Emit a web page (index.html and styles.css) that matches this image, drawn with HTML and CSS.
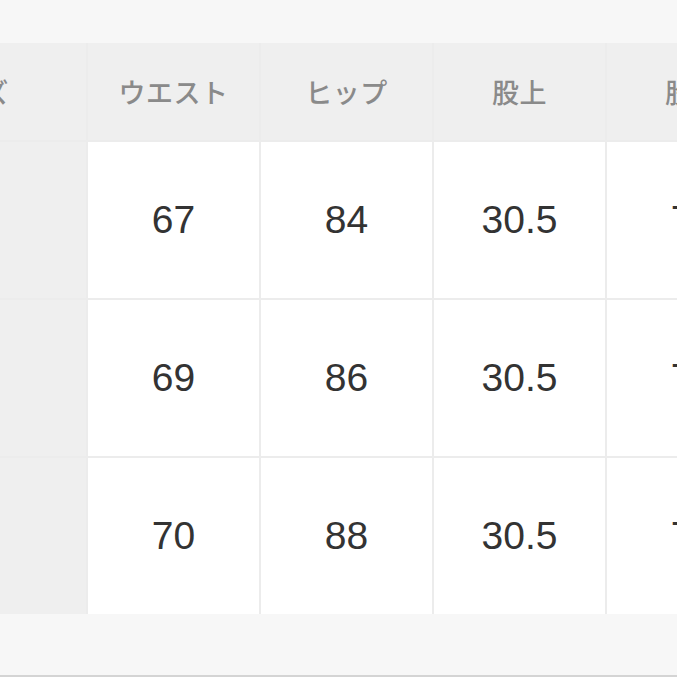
FILE: index.html
```html
<!DOCTYPE html>
<html lang="ja">
<head>
<meta charset="utf-8">
<link rel="stylesheet" href="styles.css">
</head>
<body>
<div class="page">
  <div class="top-band"></div>
  <div class="size-table">
    <div class="cell head label">サイズ</div>
    <div class="cell head">ウエスト</div>
    <div class="cell head">ヒップ</div>
    <div class="cell head">股上</div>
    <div class="cell head">股下</div>

    <div class="cell label">S</div>
    <div class="cell num">67</div>
    <div class="cell num">84</div>
    <div class="cell num">30.5</div>
    <div class="cell num">74</div>

    <div class="cell label">M</div>
    <div class="cell num">69</div>
    <div class="cell num">86</div>
    <div class="cell num">30.5</div>
    <div class="cell num">75</div>

    <div class="cell label">L</div>
    <div class="cell num">70</div>
    <div class="cell num">88</div>
    <div class="cell num">30.5</div>
    <div class="cell num">76</div>
  </div>
  <div class="filler"></div>
  <div class="bottom-line"></div>
</div>
</body>
</html>
```

FILE: styles.css
```css
html, body {
  margin: 0;
  padding: 0;
  background: #f7f7f7;
}

.page {
  width: 677px;
  height: 677px;
  overflow: hidden;
  display: flex;
  flex-direction: column;
}

.top-band {
  height: 43px;
  flex: none;
}

.size-table {
  flex: none;
  display: grid;
  grid-template-columns: 236px 171px 171px 171px 171px;
  grid-template-rows: 97px 158px 158px 158px;
  column-gap: 2px;
  row-gap: 0;
  margin-left: -150px;
  width: max-content;
  background: #ececec;
}

.cell {
  display: flex;
  align-items: center;
  justify-content: center;
  background: #ffffff;
  margin-top: 2px;
}

.cell.head {
  background: #efefef;
  margin-top: 0;
  font-family: "Noto Sans CJK JP", "Liberation Sans", sans-serif;
  font-size: 27px;
  font-weight: 500;
  color: #8a8a8a;
  letter-spacing: 0.5px;
}

.cell.label {
  background: #efefef;
  font-family: "Noto Sans CJK JP", "Liberation Sans", sans-serif;
  font-size: 27px;
  font-weight: 500;
  color: #8a8a8a;
}

.cell.num {
  font-family: "Liberation Sans", Arial, sans-serif;
  font-size: 39px;
  color: #333333;
}

.filler {
  flex: 1;
  background: #f7f7f7;
}

.bottom-line {
  height: 2px;
  flex: none;
  background: #d4d4d4;
}
```
